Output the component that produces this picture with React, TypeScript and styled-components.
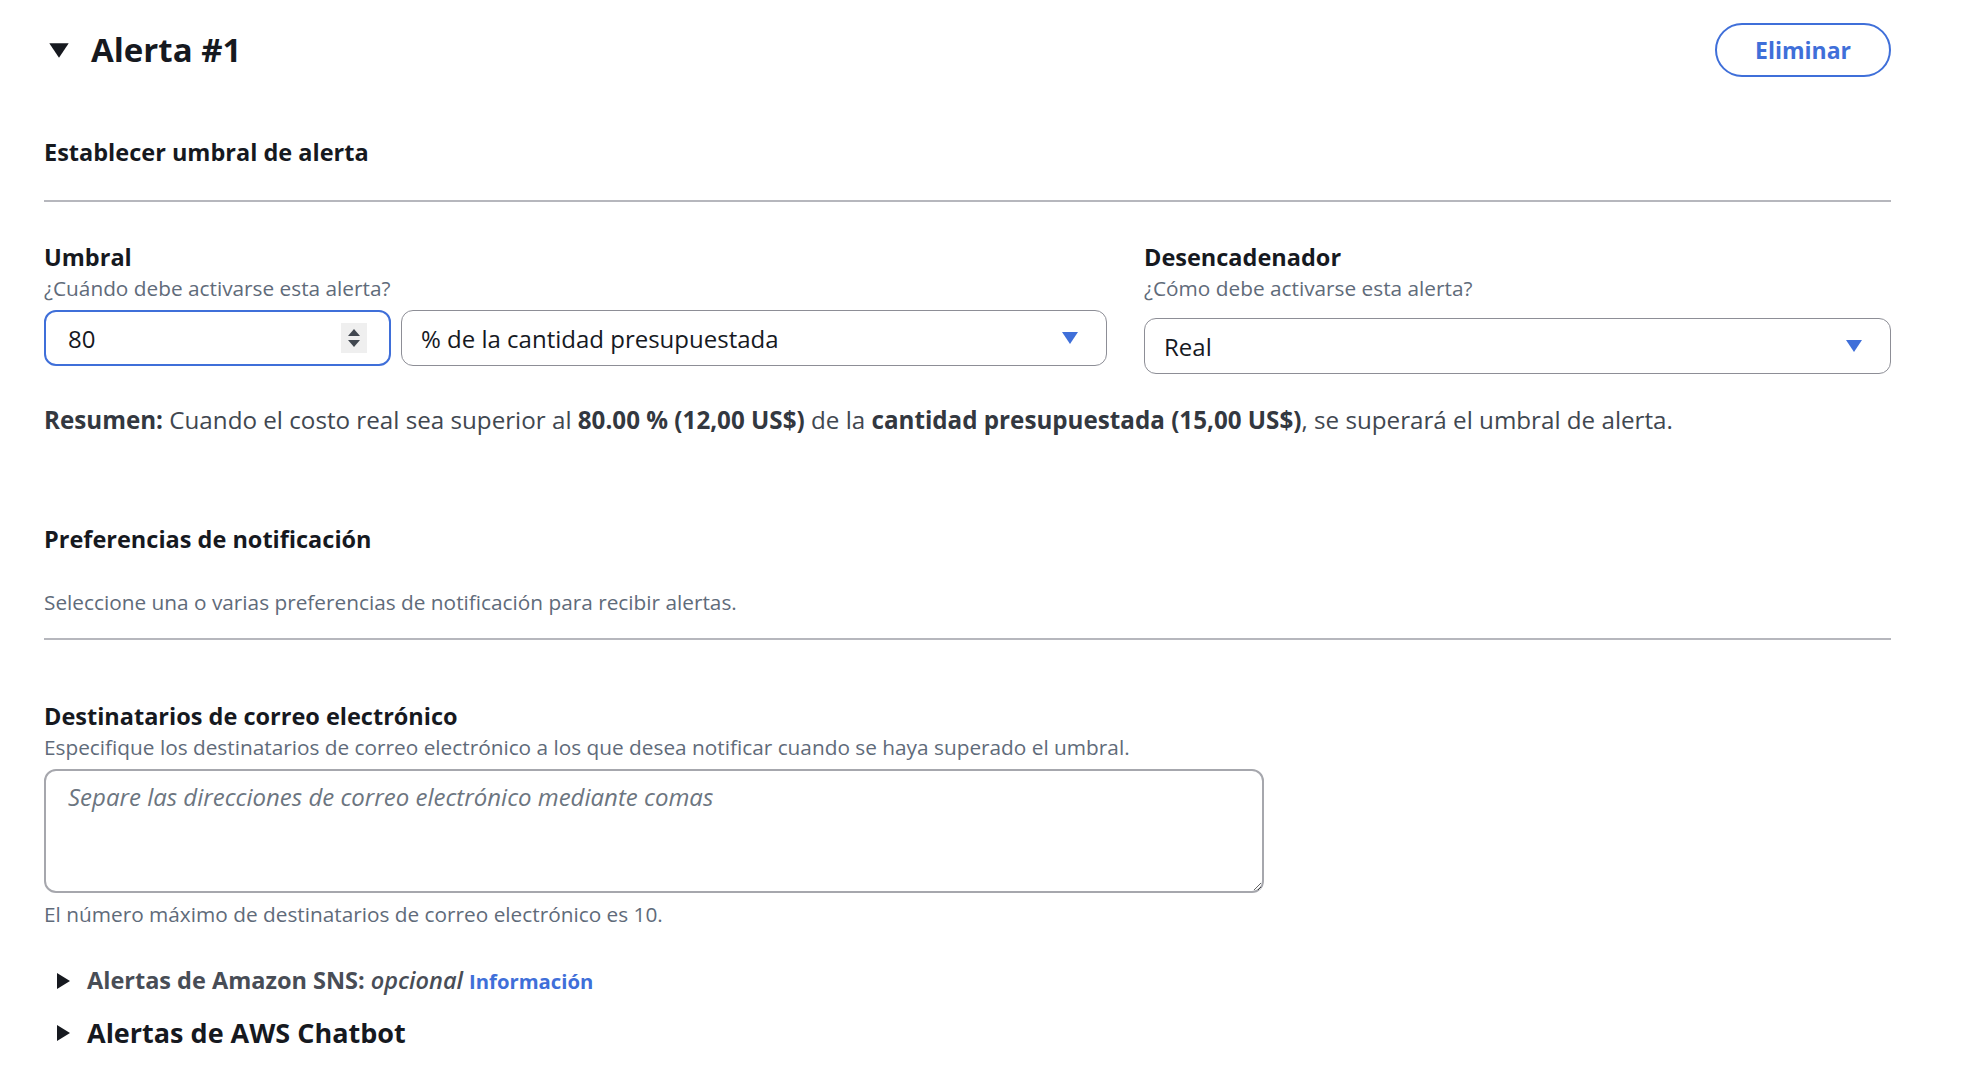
import React from 'react';
import styled, { createGlobalStyle } from 'styled-components';

const GlobalStyle = createGlobalStyle`
  html, body {
    margin: 0;
    padding: 0;
    background: #ffffff;
  }
  body {
    font-family: "Open Sans", "Noto Sans", Arial, sans-serif;
    color: #16191f;
  }
  * {
    box-sizing: border-box;
  }
`;

const BLUE = '#3f6fd9';

// Layout
const Page = styled.div`
  padding: 23px 91px 40px 44px;
`;

const Header = styled.div`
  display: flex;
  align-items: center;
  justify-content: space-between;
  height: 54px;
`;

const TitleGroup = styled.div`
  display: flex;
  align-items: center;
  gap: 21px;
  padding-left: 4px;
`;

const Title = styled.h2`
  margin: 0;
  font-size: 33px;
  line-height: 44px;
  font-weight: 700;
  color: #16191f;
`;

const PillButton = styled.button`
  width: 176px;
  height: 54px;
  border: 2px solid ${BLUE};
  border-radius: 27px;
  background: #fff;
  color: ${BLUE};
  font-family: inherit;
  font-size: 23px;
  font-weight: 700;
  cursor: pointer;
`;

const SectionTitle = styled.h3<{ $top: number }>`
  margin: ${(p) => p.$top}px 0 0;
  font-size: 23.5px;
  line-height: 30px;
  font-weight: 700;
  color: #16191f;
`;

const Divider = styled.hr<{ $top: number }>`
  margin: ${(p) => p.$top}px 0 0;
  border: none;
  height: 2px;
  background: #b6b7bd;
`;

const FieldGrid = styled.div`
  display: grid;
  grid-template-columns: 1063px 1fr;
  column-gap: 37px;
  margin-top: 40px;
`;

const Field = styled.div`
  display: flex;
  flex-direction: column;
`;

const Label = styled.label`
  font-size: 23.5px;
  line-height: 30px;
  font-weight: 700;
  color: #16191f;
`;

const Description = styled.div<{ $top?: number }>`
  margin-top: ${(p) => p.$top ?? 2}px;
  font-size: 20.8px;
  line-height: 28px;
  color: #5f6b7a;
`;

const ControlRow = styled.div<{ $top: number }>`
  display: flex;
  gap: 10px;
  margin-top: ${(p) => p.$top}px;
`;

const NumberBox = styled.div`
  display: flex;
  align-items: center;
  width: 347px;
  height: 56px;
  padding: 0 22px 0 22px;
  border: 2px solid ${BLUE};
  border-radius: 12px;
  background: #fff;
`;

const NumberInput = styled.input`
  flex: 1;
  min-width: 0;
  border: none;
  outline: none;
  padding: 0;
  font-family: inherit;
  font-size: 24px;
  color: #16191f;
  background: transparent;
`;

const Spinner = styled.span`
  display: flex;
  flex-direction: column;
  align-items: center;
  justify-content: center;
  gap: 4px;
  width: 26px;
  height: 30px;
  background: #efefef;
`;

const SelectBox = styled.div<{ $grow?: boolean }>`
  display: flex;
  align-items: center;
  justify-content: space-between;
  flex: ${(p) => (p.$grow ? 1 : 'none')};
  height: 56px;
  padding: 0 27px 0 19px;
  border: 1.5px solid #8d8e96;
  border-radius: 12px;
  background: #fff;
  font-size: 24px;
  color: #16191f;
`;

const Summary = styled.p`
  margin: 30px 0 0;
  font-size: 24.2px;
  line-height: 32px;
  color: #414750;

  b {
    color: #333840;
  }
`;

const TextArea = styled.textarea`
  display: block;
  width: 1220px;
  height: 124px;
  margin-top: 8px;
  padding: 10px 22px;
  border: 2px solid #a6a7ad;
  border-radius: 12px;
  font-family: inherit;
  font-size: 24px;
  line-height: 32px;
  color: #16191f;
  outline: none;

  &::placeholder {
    color: #6c7580;
    font-style: italic;
  }
`;

const Expander = styled.div<{ $top: number; $big?: boolean }>`
  display: flex;
  align-items: center;
  gap: 17px;
  margin-top: ${(p) => p.$top}px;
  padding-left: 13px;
  font-size: ${(p) => (p.$big ? 27 : 23.5)}px;
  line-height: ${(p) => (p.$big ? 34 : 30)}px;
  font-weight: 700;
  color: ${(p) => (p.$big ? '#16191f' : '#484d56')};

  em {
    font-weight: 600;
  }
`;

const InfoLink = styled.a`
  margin-left: 6px;
  font-size: 20.3px;
  font-weight: 700;
  color: ${BLUE};
  text-decoration: none;
`;

function CaretDown({ color = BLUE, w = 18, h = 14 }: { color?: string; w?: number; h?: number }) {
  return (
    <svg width={w} height={h} viewBox="0 0 18 14">
      <path d="M1 1h16L9 13z" fill={color} />
    </svg>
  );
}

function CaretRight() {
  return (
    <svg width="13" height="16" viewBox="0 0 13 16">
      <path d="M0 0l13 8-13 8z" fill="#16191f" />
    </svg>
  );
}

export default function App() {
  return (
    <>
      <GlobalStyle />
      <Page>
        <Header>
          <TitleGroup>
            <CaretDown color="#16191f" w={22} h={17} />
            <Title>Alerta #1</Title>
          </TitleGroup>
          <PillButton>Eliminar</PillButton>
        </Header>

        <SectionTitle $top={60}>Establecer umbral de alerta</SectionTitle>
        <Divider $top={33} />

        <FieldGrid>
          <Field>
            <Label>Umbral</Label>
            <Description>¿Cuándo debe activarse esta alerta?</Description>
            <ControlRow $top={8}>
              <NumberBox>
                <NumberInput defaultValue="80" />
                <Spinner>
                  <svg width="12" height="7" viewBox="0 0 12 7">
                    <path d="M6 0l6 7H0z" fill="#414750" />
                  </svg>
                  <svg width="12" height="7" viewBox="0 0 12 7">
                    <path d="M0 0h12L6 7z" fill="#414750" />
                  </svg>
                </Spinner>
              </NumberBox>
              <SelectBox $grow>
                <span>% de la cantidad presupuestada</span>
                <CaretDown />
              </SelectBox>
            </ControlRow>
          </Field>
          <Field>
            <Label>Desencadenador</Label>
            <Description>¿Cómo debe activarse esta alerta?</Description>
            <ControlRow $top={16}>
              <SelectBox $grow>
                <span>Real</span>
                <CaretDown />
              </SelectBox>
            </ControlRow>
          </Field>
        </FieldGrid>

        <Summary>
          <b>Resumen:</b> Cuando el costo real sea superior al <b>80.00 % (12,00 US$)</b> de la{' '}
          <b>cantidad presupuestada (15,00 US$)</b>, se superará el umbral de alerta.
        </Summary>

        <SectionTitle $top={88}>Preferencias de notificación</SectionTitle>
        <Description $top={34}>
          Seleccione una o varias preferencias de notificación para recibir alertas.
        </Description>
        <Divider $top={22} />

        <SectionTitle $top={61}>Destinatarios de correo electrónico</SectionTitle>
        <Description $top={2}>
          Especifique los destinatarios de correo electrónico a los que desea notificar cuando se haya
          superado el umbral.
        </Description>
        <TextArea placeholder="Separe las direcciones de correo electrónico mediante comas" />
        <Description $top={7}>
          El número máximo de destinatarios de correo electrónico es 10.
        </Description>

        <Expander $top={37}>
          <CaretRight />
          <span>
            Alertas de Amazon SNS: <em>opcional</em>
            <InfoLink href="#">Información</InfoLink>
          </span>
        </Expander>
        <Expander $top={20} $big>
          <CaretRight />
          <span>Alertas de AWS Chatbot</span>
        </Expander>
      </Page>
    </>
  );
}
